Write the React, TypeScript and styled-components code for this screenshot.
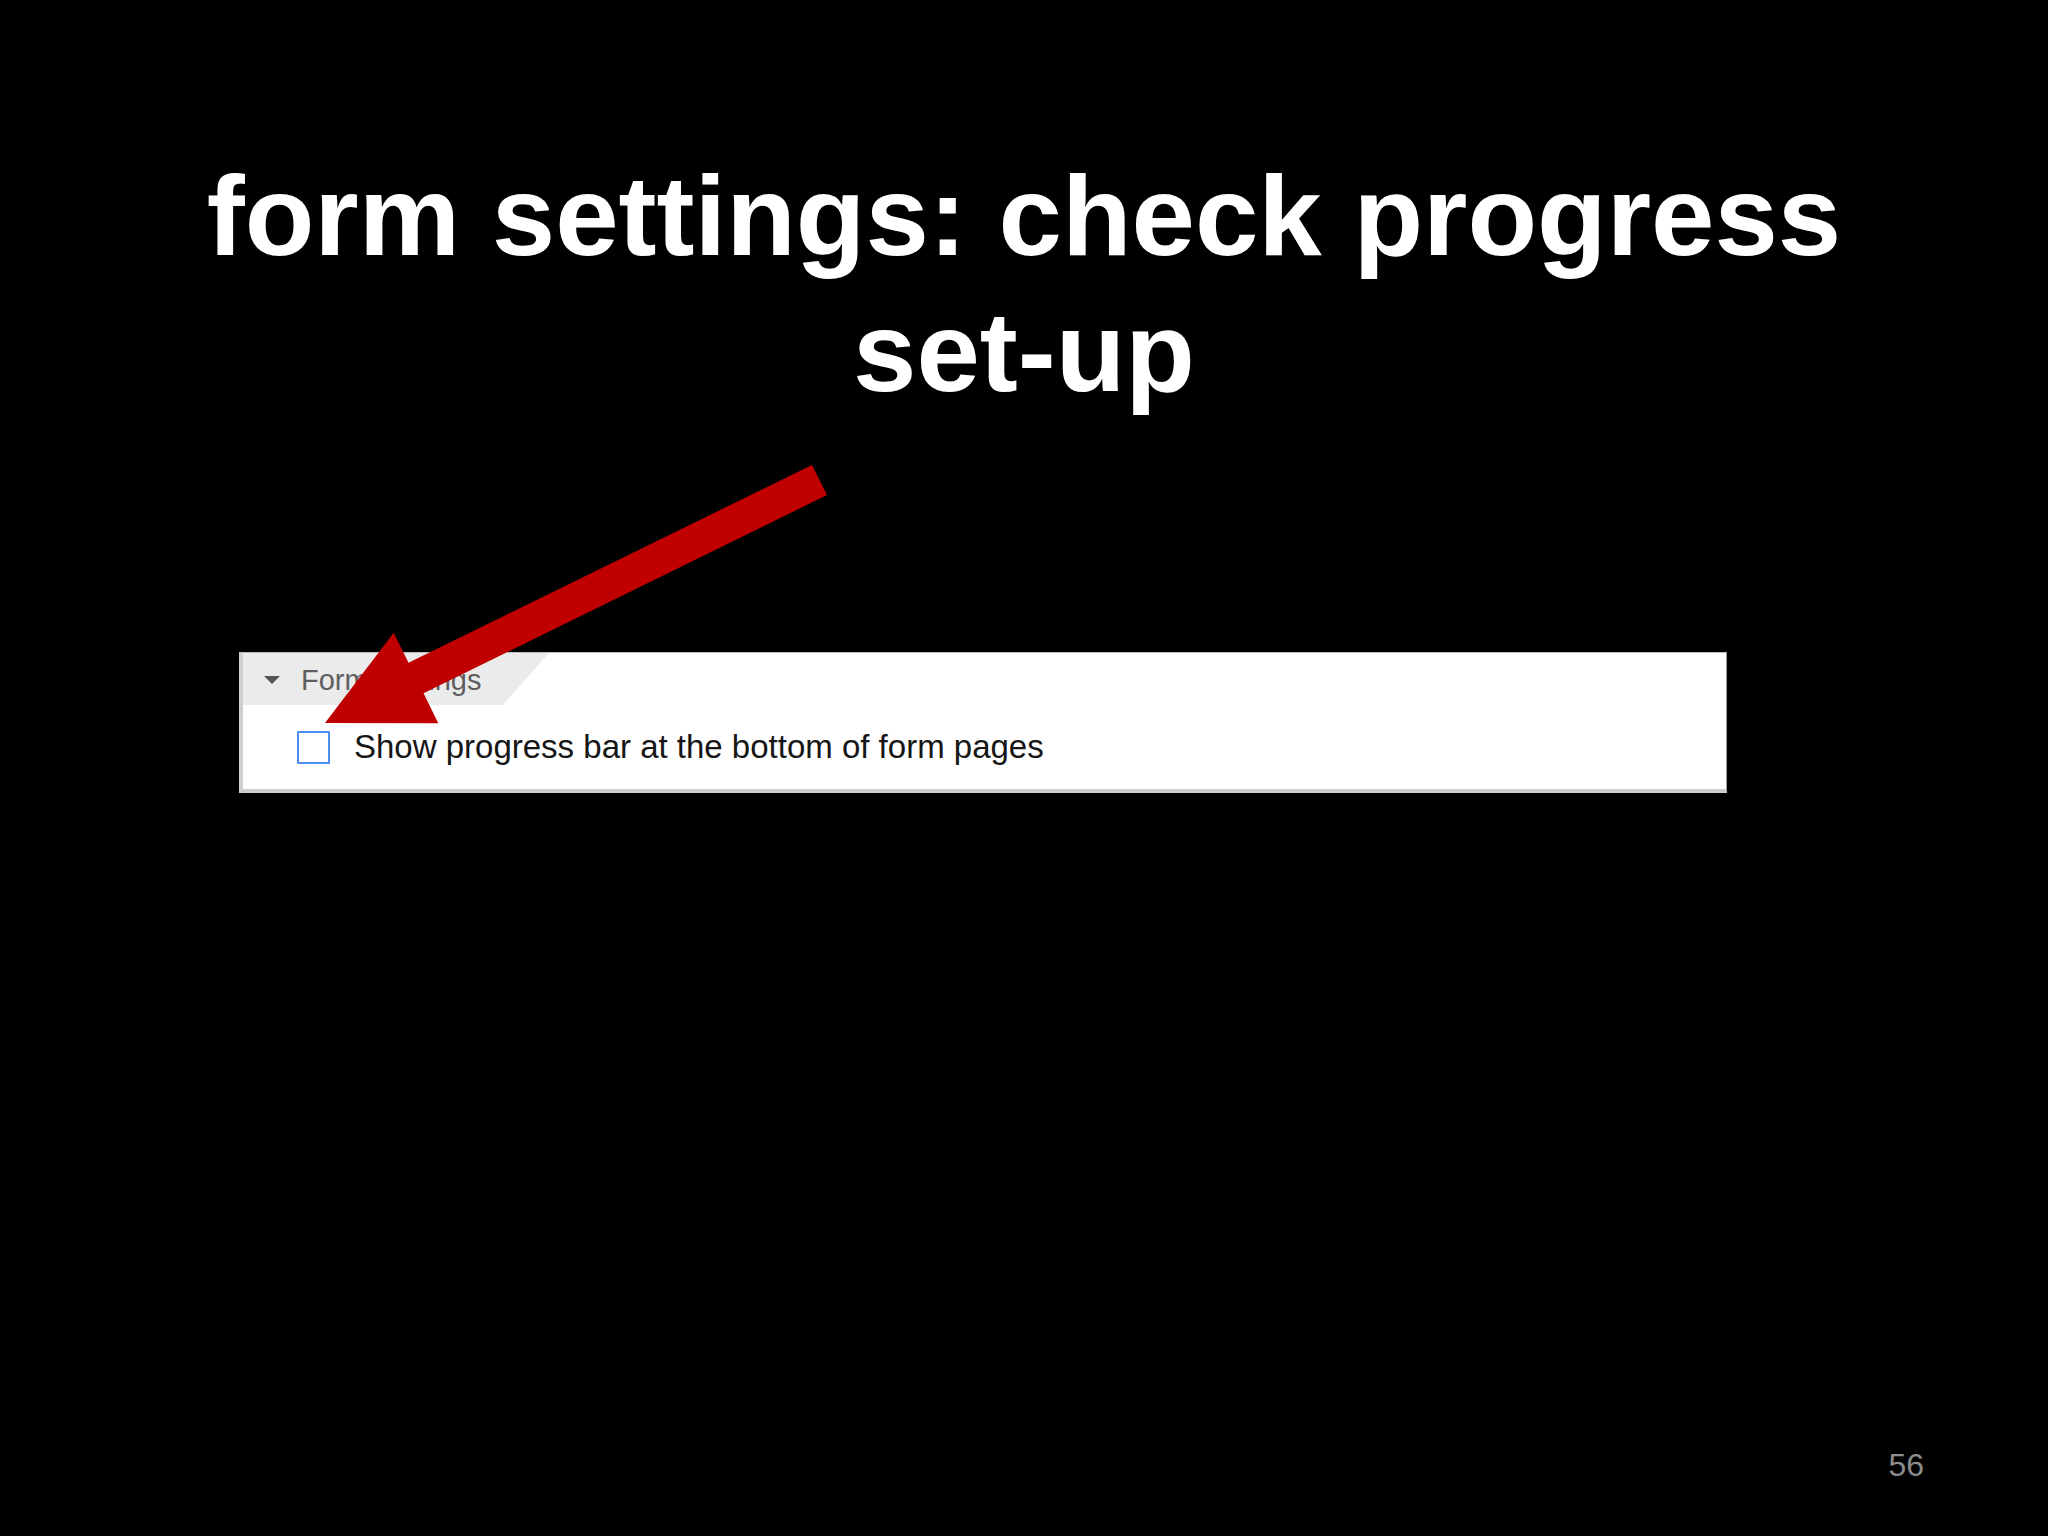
import React from "react";
import styled, { createGlobalStyle } from "styled-components";

const Global = createGlobalStyle`
  html, body {
    margin: 0;
    padding: 0;
    background: #000;
  }
  body {
    font-family: "Liberation Sans", Arial, sans-serif;
  }
`;

export default function App() {
  return (
    <>
      <Global />
      <Slide>
        <Title>
          form settings: check progress
          <br />
          set-up
        </Title>

        <Panel>
          <HeaderRow>
            <Tab>
              <Caret />
              <TabLabel>Form Settings</TabLabel>
            </Tab>
          </HeaderRow>
          <OptionRow>
            <Checkbox />
            <OptionLabel>Show progress bar at the bottom of form pages</OptionLabel>
          </OptionRow>
        </Panel>

        <PageNumber>56</PageNumber>

        <Arrow viewBox="0 0 2048 1536">
          <polygon
            points="812,465 408.5,662.7 393.7,632.7 325,723 438.3,723.3 423.5,693.3 827,495"
            fill="#c00000"
          />
        </Arrow>
      </Slide>
    </>
  );
}

const Slide = styled.div`
  position: relative;
  width: 2048px;
  height: 1536px;
  background: #000;
  display: flex;
  flex-direction: column;
  box-sizing: border-box;
  padding: 148px 0 55px;
  overflow: hidden;
`;

const Title = styled.h1`
  margin: 0;
  font-family: "Liberation Sans", Arial, sans-serif;
  font-weight: 700;
  font-size: 114px;
  line-height: 136px;
  color: #fff;
  text-align: center;
`;

const Panel = styled.div`
  margin: 232px 0 0 239px;
  width: 1488px;
  box-sizing: border-box;
  background: #fff;
  border-left: 4px solid #cfcfcf;
  border-top: 1px solid #bdbdbd;
  border-right: 1px solid #9a9a9a;
  border-bottom: 4px solid #cdcdcd;
  display: flex;
  flex-direction: column;
`;

const HeaderRow = styled.div`
  height: 52px;
  display: flex;
`;

const Tab = styled.div`
  width: 306px;
  height: 100%;
  background: #ebebeb;
  clip-path: polygon(0 0, 100% 0, calc(100% - 46px) 100%, 0 100%);
  display: flex;
  align-items: center;
  padding-left: 21px;
  box-sizing: border-box;
`;

const Caret = styled.span`
  width: 0;
  height: 0;
  border-left: 8.5px solid transparent;
  border-right: 8.5px solid transparent;
  border-top: 8px solid #555;
  margin-right: 21px;
  margin-top: 2px;
`;

const TabLabel = styled.span`
  font-size: 29px;
  line-height: 52px;
  color: #5f5f5f;
  padding-top: 1px;
`;

const OptionRow = styled.div`
  height: 84px;
  display: flex;
  align-items: center;
  padding-left: 54px;
`;

const Checkbox = styled.span`
  width: 33px;
  height: 33px;
  box-sizing: border-box;
  border: 2px solid #4d8ef0;
  border-radius: 1px;
  background: #fff;
  margin-right: 24px;
  flex-shrink: 0;
`;

const OptionLabel = styled.span`
  font-size: 33px;
  line-height: 38px;
  color: #161616;
`;

const PageNumber = styled.div`
  margin-top: auto;
  align-self: flex-end;
  padding-right: 124px;
  font-size: 32px;
  line-height: 32px;
  color: #8c8c8c;
`;

const Arrow = styled.svg`
  position: absolute;
  left: 0;
  top: 0;
  width: 2048px;
  height: 1536px;
  pointer-events: none;
`;
